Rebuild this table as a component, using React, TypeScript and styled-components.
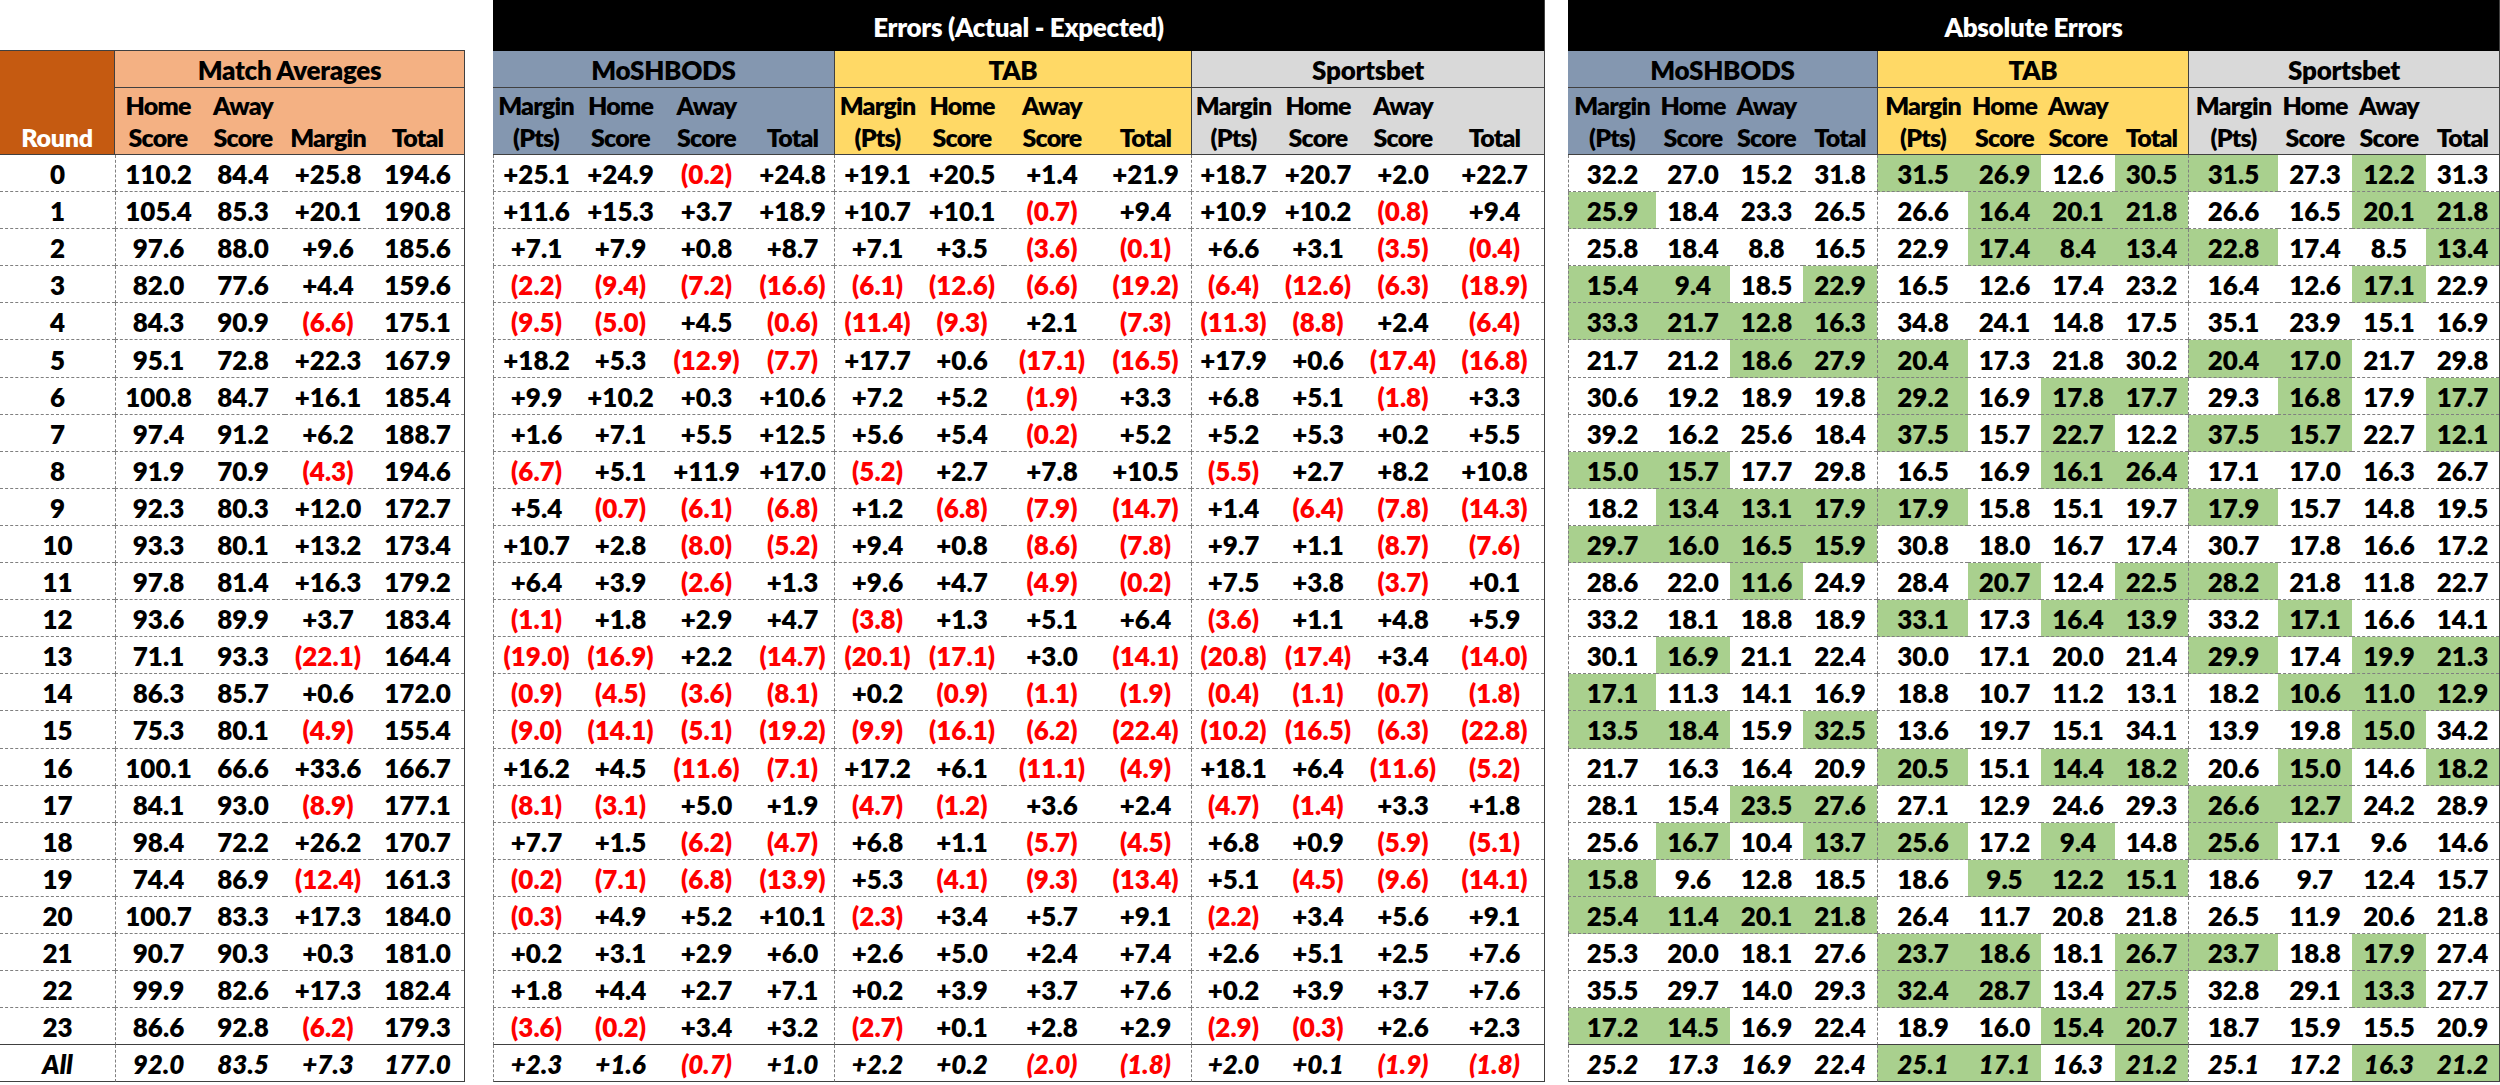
import React from "react";
import styled, { createGlobalStyle } from "styled-components";

const LINE = "#404040";
const DASH = "#808080";

const GlobalStyle = createGlobalStyle`
  html, body {
    margin: 0;
    padding: 0;
    background: #fff;
  }
`;

const Page = styled.div`
  display: flex;
  align-items: flex-end;
  width: 2500px;
  font-family: Lato, "Open Sans", sans-serif;
  font-weight: 800;
  font-size: 26px;
  color: #000;
`;

const Sheet = styled.div<{ $cols: number[]; $gap: number; $top?: boolean }>`
  display: grid;
  grid-template-columns: ${(p) => p.$cols.map((c) => `${c}px`).join(" ")};
  margin-left: ${(p) => p.$gap}px;
  border-right: 1px solid ${LINE};
  border-top: ${(p) => (p.$top ? `1px solid ${LINE}` : "none")};
`;

const Title = styled.div`
  grid-column: 1 / -1;
  height: 51px;
  box-sizing: border-box;
  padding-top: 2px;
  background: #000;
  color: #fff;
  display: flex;
  align-items: center;
  justify-content: center;
  letter-spacing: -0.3px;
`;

const GroupHead = styled.div<{ $span: number; $bg: string; $edge: boolean }>`
  grid-column: span ${(p) => p.$span};
  height: 37px;
  box-sizing: border-box;
  padding-top: 2px;
  background: ${(p) => p.$bg};
  border-bottom: 1px solid ${LINE};
  border-left: ${(p) => (p.$edge ? `1px solid ${LINE}` : "none")};
  display: flex;
  align-items: center;
  justify-content: center;
  letter-spacing: -0.3px;
`;

const SubHead = styled.div<{ $bg: string; $edge: boolean }>`
  height: 67px;
  box-sizing: border-box;
  padding-bottom: 1px;
  background: ${(p) => p.$bg};
  border-bottom: 1px solid ${LINE};
  border-left: ${(p) => (p.$edge ? `1px solid ${LINE}` : "none")};
  display: flex;
  flex-direction: column;
  justify-content: flex-end;
  align-items: center;
  font-size: 25px;
  letter-spacing: -0.8px;
  line-height: 32px;
  white-space: nowrap;
`;

const RoundHead = styled.div`
  grid-row: span 2;
  height: 104px;
  box-sizing: border-box;
  padding-bottom: 1px;
  background: #c55a11;
  color: #fff;
  border-bottom: 1px solid ${LINE};
  border-right: 1px solid ${LINE};
  display: flex;
  align-items: flex-end;
  justify-content: center;
  font-size: 25px;
  letter-spacing: -0.3px;
  line-height: 32px;
`;

type Edge = "none" | "dash" | "solid";

const Cell = styled.div<{
  $edge: Edge;
  $bottom: "dash" | "solid";
  $neg: boolean;
  $hi: boolean;
  $italic: boolean;
}>`
  height: 37.1px;
  box-sizing: border-box;
  padding-top: 2px;
  display: flex;
  align-items: center;
  justify-content: center;
  background: ${(p) => (p.$hi ? "#a9d08e" : "#fff")};
  color: ${(p) => (p.$neg ? "#ff0000" : "#000")};
  font-style: ${(p) => (p.$italic ? "italic" : "normal")};
  border-bottom: 1px ${(p) => (p.$bottom === "dash" ? "dashed" : "solid")}
    ${(p) => (p.$bottom === "dash" ? DASH : LINE)};
  border-left: ${(p) =>
    p.$edge === "none" ? "none" : p.$edge === "dash" ? `1px dashed ${DASH}` : `1px solid ${LINE}`};
  white-space: nowrap;
`;

type Group = { name: string; bg: string; labels: [string, string][] };

const ERR_LABELS: [string, string][] = [
  ["Margin", "(Pts)"],
  ["Home", "Score"],
  ["Away", "Score"],
  ["", "Total"],
];

const BLUE = "#8497b0";
const YELLOW = "#ffd966";
const GREY = "#d9d9d9";
const PEACH = "#f4b183";

const BOOKS: Group[] = [
  { name: "MoSHBODS", bg: BLUE, labels: ERR_LABELS },
  { name: "TAB", bg: YELLOW, labels: ERR_LABELS },
  { name: "Sportsbet", bg: GREY, labels: ERR_LABELS },
];

const ROUNDS = Array.from({ length: 24 }, (_, i) => String(i)).concat("All");

const AVERAGES = `
110.2 84.4 +25.8 194.6
105.4 85.3 +20.1 190.8
97.6 88.0 +9.6 185.6
82.0 77.6 +4.4 159.6
84.3 90.9 (6.6) 175.1
95.1 72.8 +22.3 167.9
100.8 84.7 +16.1 185.4
97.4 91.2 +6.2 188.7
91.9 70.9 (4.3) 194.6
92.3 80.3 +12.0 172.7
93.3 80.1 +13.2 173.4
97.8 81.4 +16.3 179.2
93.6 89.9 +3.7 183.4
71.1 93.3 (22.1) 164.4
86.3 85.7 +0.6 172.0
75.3 80.1 (4.9) 155.4
100.1 66.6 +33.6 166.7
84.1 93.0 (8.9) 177.1
98.4 72.2 +26.2 170.7
74.4 86.9 (12.4) 161.3
100.7 83.3 +17.3 184.0
90.7 90.3 +0.3 181.0
99.9 82.6 +17.3 182.4
86.6 92.8 (6.2) 179.3
92.0 83.5 +7.3 177.0
`;

const ERRORS = `
+25.1 +24.9 (0.2) +24.8 +19.1 +20.5 +1.4 +21.9 +18.7 +20.7 +2.0 +22.7
+11.6 +15.3 +3.7 +18.9 +10.7 +10.1 (0.7) +9.4 +10.9 +10.2 (0.8) +9.4
+7.1 +7.9 +0.8 +8.7 +7.1 +3.5 (3.6) (0.1) +6.6 +3.1 (3.5) (0.4)
(2.2) (9.4) (7.2) (16.6) (6.1) (12.6) (6.6) (19.2) (6.4) (12.6) (6.3) (18.9)
(9.5) (5.0) +4.5 (0.6) (11.4) (9.3) +2.1 (7.3) (11.3) (8.8) +2.4 (6.4)
+18.2 +5.3 (12.9) (7.7) +17.7 +0.6 (17.1) (16.5) +17.9 +0.6 (17.4) (16.8)
+9.9 +10.2 +0.3 +10.6 +7.2 +5.2 (1.9) +3.3 +6.8 +5.1 (1.8) +3.3
+1.6 +7.1 +5.5 +12.5 +5.6 +5.4 (0.2) +5.2 +5.2 +5.3 +0.2 +5.5
(6.7) +5.1 +11.9 +17.0 (5.2) +2.7 +7.8 +10.5 (5.5) +2.7 +8.2 +10.8
+5.4 (0.7) (6.1) (6.8) +1.2 (6.8) (7.9) (14.7) +1.4 (6.4) (7.8) (14.3)
+10.7 +2.8 (8.0) (5.2) +9.4 +0.8 (8.6) (7.8) +9.7 +1.1 (8.7) (7.6)
+6.4 +3.9 (2.6) +1.3 +9.6 +4.7 (4.9) (0.2) +7.5 +3.8 (3.7) +0.1
(1.1) +1.8 +2.9 +4.7 (3.8) +1.3 +5.1 +6.4 (3.6) +1.1 +4.8 +5.9
(19.0) (16.9) +2.2 (14.7) (20.1) (17.1) +3.0 (14.1) (20.8) (17.4) +3.4 (14.0)
(0.9) (4.5) (3.6) (8.1) +0.2 (0.9) (1.1) (1.9) (0.4) (1.1) (0.7) (1.8)
(9.0) (14.1) (5.1) (19.2) (9.9) (16.1) (6.2) (22.4) (10.2) (16.5) (6.3) (22.8)
+16.2 +4.5 (11.6) (7.1) +17.2 +6.1 (11.1) (4.9) +18.1 +6.4 (11.6) (5.2)
(8.1) (3.1) +5.0 +1.9 (4.7) (1.2) +3.6 +2.4 (4.7) (1.4) +3.3 +1.8
+7.7 +1.5 (6.2) (4.7) +6.8 +1.1 (5.7) (4.5) +6.8 +0.9 (5.9) (5.1)
(0.2) (7.1) (6.8) (13.9) +5.3 (4.1) (9.3) (13.4) +5.1 (4.5) (9.6) (14.1)
(0.3) +4.9 +5.2 +10.1 (2.3) +3.4 +5.7 +9.1 (2.2) +3.4 +5.6 +9.1
+0.2 +3.1 +2.9 +6.0 +2.6 +5.0 +2.4 +7.4 +2.6 +5.1 +2.5 +7.6
+1.8 +4.4 +2.7 +7.1 +0.2 +3.9 +3.7 +7.6 +0.2 +3.9 +3.7 +7.6
(3.6) (0.2) +3.4 +3.2 (2.7) +0.1 +2.8 +2.9 (2.9) (0.3) +2.6 +2.3
+2.3 +1.6 (0.7) +1.0 +2.2 +0.2 (2.0) (1.8) +2.0 +0.1 (1.9) (1.8)
`;

// a trailing * marks the best (lowest) absolute error, shaded green
const ABSOLUTE = `
32.2 27.0 15.2 31.8 31.5* 26.9* 12.6 30.5* 31.5* 27.3 12.2* 31.3
25.9* 18.4 23.3 26.5 26.6 16.4* 20.1* 21.8* 26.6 16.5 20.1* 21.8*
25.8 18.4 8.8 16.5 22.9 17.4* 8.4* 13.4* 22.8* 17.4 8.5 13.4*
15.4* 9.4* 18.5 22.9* 16.5 12.6 17.4 23.2 16.4 12.6 17.1* 22.9
33.3* 21.7* 12.8* 16.3* 34.8 24.1 14.8 17.5 35.1 23.9 15.1 16.9
21.7 21.2 18.6* 27.9* 20.4* 17.3 21.8 30.2 20.4* 17.0* 21.7 29.8
30.6 19.2 18.9 19.8 29.2* 16.9 17.8* 17.7* 29.3 16.8* 17.9 17.7*
39.2 16.2 25.6 18.4 37.5* 15.7 22.7* 12.2 37.5* 15.7* 22.7 12.1*
15.0* 15.7* 17.7 29.8 16.5 16.9 16.1* 26.4* 17.1 17.0 16.3 26.7
18.2 13.4* 13.1* 17.9* 17.9* 15.8 15.1 19.7 17.9* 15.7 14.8 19.5
29.7* 16.0* 16.5* 15.9* 30.8 18.0 16.7 17.4 30.7 17.8 16.6 17.2
28.6 22.0 11.6* 24.9 28.4 20.7* 12.4 22.5* 28.2* 21.8 11.8 22.7
33.2 18.1 18.8 18.9 33.1* 17.3 16.4* 13.9* 33.2 17.1* 16.6 14.1
30.1 16.9* 21.1 22.4 30.0 17.1 20.0 21.4 29.9* 17.4 19.9* 21.3*
17.1* 11.3 14.1 16.9 18.8 10.7 11.2 13.1 18.2 10.6* 11.0* 12.9*
13.5* 18.4* 15.9 32.5* 13.6 19.7 15.1 34.1 13.9 19.8 15.0* 34.2
21.7 16.3 16.4 20.9 20.5* 15.1 14.4* 18.2* 20.6 15.0* 14.6 18.2*
28.1 15.4 23.5* 27.6* 27.1 12.9 24.6 29.3 26.6* 12.7* 24.2 28.9
25.6 16.7* 10.4 13.7* 25.6* 17.2 9.4* 14.8 25.6* 17.1 9.6 14.6
15.8* 9.6 12.8 18.5 18.6 9.5* 12.2* 15.1* 18.6 9.7 12.4 15.7
25.4* 11.4* 20.1* 21.8* 26.4 11.7 20.8 21.8 26.5 11.9 20.6 21.8
25.3 20.0 18.1 27.6 23.7* 18.6* 18.1 26.7* 23.7* 18.8 17.9* 27.4
35.5 29.7 14.0 29.3 32.4* 28.7* 13.4 27.5* 32.8 29.1 13.3* 27.7
17.2* 14.5* 16.9 22.4 18.9 16.0 15.4* 20.7* 18.7 15.9 15.5 20.9
25.2 17.3 16.9 22.4 25.1* 17.1* 16.3 21.2* 25.1 17.2 16.3* 21.2*
`;

const parse = (block: string) =>
  block
    .trim()
    .split("\n")
    .map((line) => line.trim().split(/\s+/));

type Row = string[];

function BodyRows({ rows, edges }: { rows: Row[]; edges: Edge[] }) {
  const last = rows.length - 1;
  return (
    <>
      {rows.map((row, r) =>
        row.map((raw, c) => {
          const hi = raw.endsWith("*");
          const text = hi ? raw.slice(0, -1) : raw;
          return (
            <Cell
              key={`${r}-${c}`}
              $edge={edges[c]}
              $bottom={r >= last - 1 ? "solid" : "dash"}
              $neg={text.startsWith("(")}
              $hi={hi}
              $italic={r === last}
            >
              {text}
            </Cell>
          );
        })
      )}
    </>
  );
}

function GroupHeaders({ groups }: { groups: Group[] }) {
  return (
    <>
      {groups.map((g, i) => (
        <GroupHead key={g.name} $span={g.labels.length} $bg={g.bg} $edge={i > 0}>
          {g.name}
        </GroupHead>
      ))}
      {groups.map((g, i) =>
        g.labels.map(([top, bottom], j) => (
          <SubHead key={`${g.name}-${j}`} $bg={g.bg} $edge={j === 0 && i > 0}>
            {top && <span>{top}</span>}
            <span>{bottom}</span>
          </SubHead>
        ))
      )}
    </>
  );
}

const bookEdges: Edge[] = ["dash", "none", "none", "none", "dash", "none", "none", "none", "dash", "none", "none", "none"];

function BookSheet({ title, cols, gap, rows }: { title: string; cols: number[]; gap: number; rows: Row[] }) {
  return (
    <Sheet $cols={cols} $gap={gap}>
      <Title>{title}</Title>
      <GroupHeaders groups={BOOKS} />
      <BodyRows rows={rows} edges={bookEdges} />
    </Sheet>
  );
}

export default function App() {
  const averages = parse(AVERAGES).map((r, i) => [ROUNDS[i], ...r]);
  const matchGroup: Group = {
    name: "Match Averages",
    bg: PEACH,
    labels: [
      ["Home", "Score"],
      ["Away", "Score"],
      ["", "Margin"],
      ["", "Total"],
    ],
  };

  return (
    <>
      <GlobalStyle />
      <Page>
        <Sheet $cols={[115, 86, 84, 86, 93]} $gap={0} $top>
          <RoundHead>Round</RoundHead>
          <GroupHeaders groups={[matchGroup]} />
          <BodyRows rows={averages} edges={["none", "dash", "none", "none", "none"]} />
        </Sheet>
        <BookSheet
          title="Errors (Actual - Expected)"
          cols={[86, 83, 89, 83, 86, 84, 96, 91, 84, 86, 84, 99]}
          gap={28}
          rows={parse(ERRORS)}
        />
        <BookSheet
          title="Absolute Errors"
          cols={[88, 74, 73, 74, 91, 73, 74, 73, 90, 74, 74, 73]}
          gap={23}
          rows={parse(ABSOLUTE)}
        />
      </Page>
    </>
  );
}
